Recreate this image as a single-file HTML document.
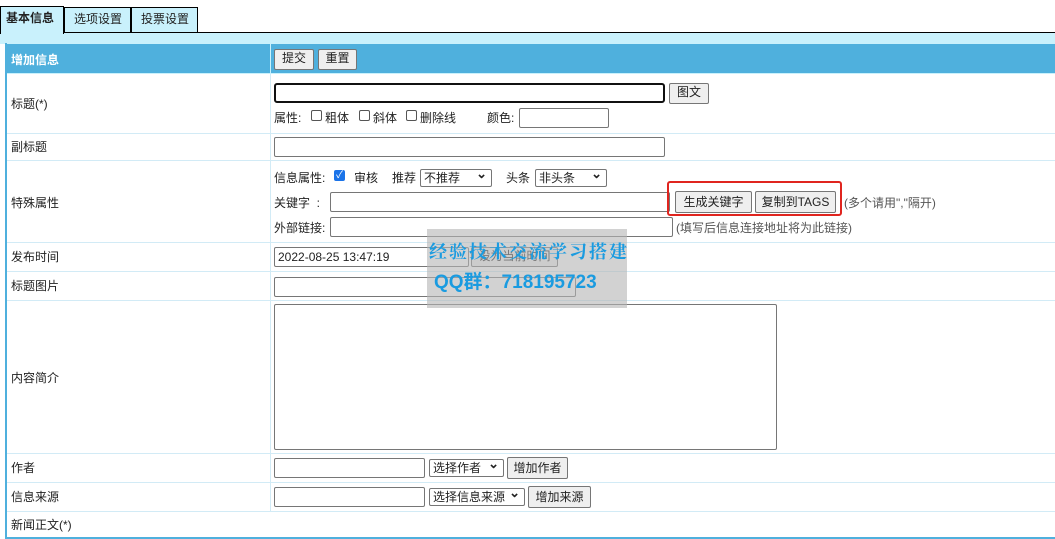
<!DOCTYPE html><html><head><meta charset="utf-8"><style>
body{margin:0;width:1055px;height:539px;overflow:hidden;background:#fff;font-family:"Liberation Sans","Noto Sans CJK SC",sans-serif;font-size:12px;color:#222;position:relative}
.a{position:absolute}
.t{position:absolute;white-space:nowrap;line-height:14px}
.in{position:absolute;border:1px solid #767676;border-radius:2px;background:#fff;box-sizing:border-box}
.btn{position:absolute;border:1px solid #767676;border-radius:2px;background:#efefef;box-sizing:border-box;text-align:center;font-size:12px;line-height:17px;white-space:nowrap}
.hl{position:absolute;left:7px;right:0;height:1px;background:#d2ebf6}
.cb{position:absolute;width:11px;height:11px;border:1px solid #555;border-radius:2px;background:#fff;box-sizing:border-box}
.sel{position:absolute;border:1px solid #767676;border-radius:2px;background:#fff;box-sizing:border-box;font-size:12px;line-height:16px;padding-left:3px;white-space:nowrap}
.sel:after{content:"⌄";position:absolute;right:4px;top:-4px;font-weight:bold;font-size:13px}
</style></head><body>
<div class="a" style="left:0;top:32px;width:1055px;height:11px;background:#c9f1fc;border-top:1px solid #000"></div>
<div class="a" style="left:0;top:6px;width:64px;height:28px;background:#c9f1fc;border:1px solid #000;border-bottom:none;box-sizing:border-box"></div>
<div class="t" style="left:6px;top:11px;font-weight:bold">基本信息</div>
<div class="a" style="left:64px;top:7px;width:67px;height:26px;background:#c9f1fc;border:1px solid #000;box-sizing:border-box"></div>
<div class="t" style="left:74px;top:12px">选项设置</div>
<div class="a" style="left:131px;top:7px;width:67px;height:26px;background:#c9f1fc;border:1px solid #000;box-sizing:border-box"></div>
<div class="t" style="left:141px;top:12px">投票设置</div>
<div class="a" style="left:5px;top:43px;width:2px;height:496px;background:#4fb0dd"></div>
<div class="a" style="left:5px;top:537px;width:1050px;height:2px;background:#4fb0dd"></div>
<div class="a" style="left:7px;top:43px;width:1048px;height:31px;background:#4fb0dd;border-top:1px solid #c9f1fc;border-bottom:1px solid #c9f1fc;box-sizing:border-box"></div>
<div class="a" style="left:270px;top:44px;width:1px;height:29px;background:#c9f1fc"></div>
<div class="t" style="left:11px;top:53px;color:#fff;font-weight:bold">增加信息</div>
<div class="btn" style="left:274px;top:49px;width:40px;height:21px">提交</div>
<div class="btn" style="left:318px;top:49px;width:39px;height:21px">重置</div>
<div class="a" style="left:270px;top:74px;width:1px;height:437px;background:#d2ebf6"></div>
<div class="hl" style="top:133px"></div><div class="hl" style="top:160px"></div><div class="hl" style="top:242px"></div><div class="hl" style="top:271px"></div><div class="hl" style="top:300px"></div><div class="hl" style="top:453px"></div><div class="hl" style="top:482px"></div><div class="hl" style="top:511px"></div>
<div class="t" style="left:11px;top:97px">标题(*)</div>
<div class="t" style="left:11px;top:140px">副标题</div>
<div class="t" style="left:11px;top:196px">特殊属性</div>
<div class="t" style="left:11px;top:250px">发布时间</div>
<div class="t" style="left:11px;top:279px">标题图片</div>
<div class="t" style="left:11px;top:371px">内容简介</div>
<div class="t" style="left:11px;top:461px">作者</div>
<div class="t" style="left:11px;top:490px">信息来源</div>
<div class="t" style="left:11px;top:518px">新闻正文(*)</div>
<div class="in" style="left:274px;top:83px;width:391px;height:20px;border:2px solid #111;border-radius:3px"></div>
<div class="btn" style="left:669px;top:83px;width:40px;height:21px">图文</div>
<div class="t" style="left:274px;top:111px">属性:</div>
<div class="cb" style="left:311px;top:110px"></div><div class="t" style="left:325px;top:111px">粗体</div>
<div class="cb" style="left:359px;top:110px"></div><div class="t" style="left:373px;top:111px">斜体</div>
<div class="cb" style="left:406px;top:110px"></div><div class="t" style="left:420px;top:111px">删除线</div>
<div class="t" style="left:487px;top:111px">颜色:</div>
<div class="in" style="left:519px;top:108px;width:90px;height:20px"></div>
<div class="in" style="left:274px;top:137px;width:391px;height:20px"></div>
<div class="t" style="left:274px;top:171px">信息属性:</div>
<div class="cb" style="left:334px;top:170px;background:#1a73e8;border-color:#1a73e8;color:#fff;font-size:10px;line-height:9px;text-align:center">✓</div>
<div class="t" style="left:354px;top:171px">审核</div>
<div class="t" style="left:392px;top:171px">推荐</div>
<div class="sel" style="left:420px;top:169px;width:72px;height:18px">不推荐</div>
<div class="t" style="left:506px;top:171px">头条</div>
<div class="sel" style="left:535px;top:169px;width:72px;height:18px">非头条</div>
<div class="t" style="left:274px;top:196px">关键字 &nbsp;:</div>
<div class="in" style="left:330px;top:192px;width:340px;height:20px"></div>
<div class="a" style="left:667px;top:181px;width:175px;height:35px;border:2px solid #e0251f;border-radius:3px;box-sizing:border-box"></div>
<div class="btn" style="left:675px;top:191px;width:77px;height:22px;line-height:20px">生成关键字</div>
<div class="btn" style="left:755px;top:191px;width:81px;height:22px;line-height:20px">复制到TAGS</div>
<div class="t" style="left:844px;top:196px;color:#555">(多个请用","隔开)</div>
<div class="t" style="left:274px;top:221px">外部链接:</div>
<div class="in" style="left:330px;top:217px;width:343px;height:20px"></div>
<div class="t" style="left:676px;top:221px;color:#555">(填写后信息连接地址将为此链接)</div>
<div class="in" style="left:274px;top:247px;width:195px;height:20px;padding:2px 3px;line-height:14px">2022-08-25 13:47:19</div>
<div class="btn" style="left:471px;top:247px;width:87px;height:20px">设为当前时间</div>
<div class="in" style="left:274px;top:277px;width:302px;height:20px"></div>
<div class="in" style="left:274px;top:304px;width:503px;height:146px"></div>
<div class="in" style="left:274px;top:458px;width:151px;height:20px"></div>
<div class="sel" style="left:429px;top:459px;width:75px;height:18px">选择作者</div>
<div class="btn" style="left:507px;top:457px;width:61px;height:22px;line-height:20px">增加作者</div>
<div class="in" style="left:274px;top:487px;width:151px;height:20px"></div>
<div class="sel" style="left:429px;top:488px;width:96px;height:18px">选择信息来源</div>
<div class="btn" style="left:528px;top:486px;width:63px;height:22px;line-height:20px">增加来源</div>
<div class="a" style="left:427px;top:229px;width:200px;height:79px;background:rgba(180,180,180,0.6)"></div>
<div class="t" style="left:429px;top:240px;font-size:18px;line-height:22px;color:#1a9be0;font-family:'Noto Serif CJK SC',serif;font-weight:bold;letter-spacing:2px">经验技术交流学习搭建</div>
<div class="t" style="left:434px;top:272px;font-size:19px;line-height:22px;color:#1a9be0;font-weight:bold">QQ群：718195723</div>
</body></html>
